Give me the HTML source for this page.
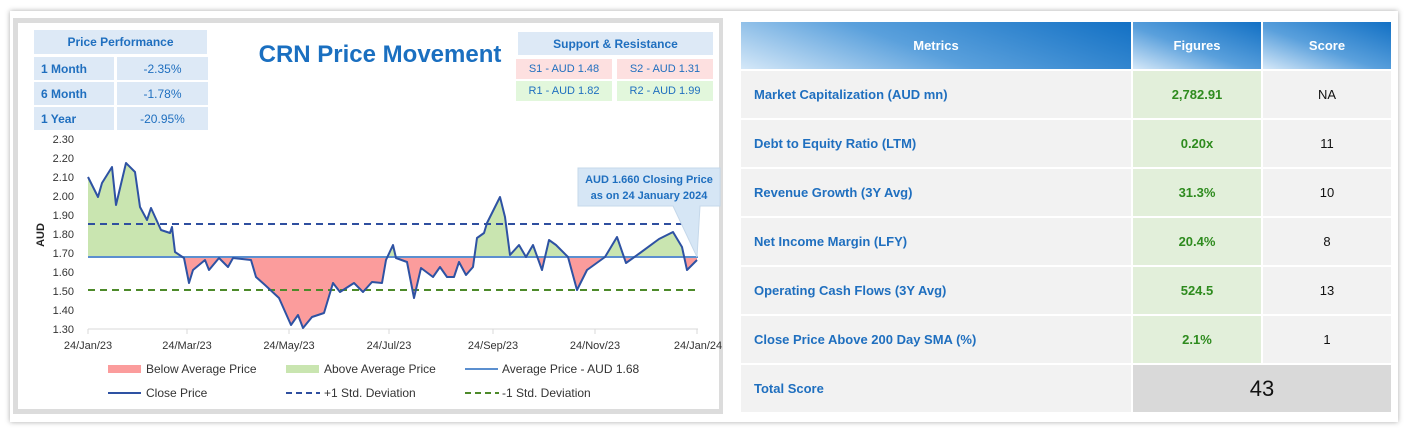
<!DOCTYPE html>
<html><head><meta charset="utf-8"><style>
*{margin:0;padding:0;box-sizing:border-box}
body{width:1407px;height:433px;background:#fff;position:relative;overflow:hidden;font-family:"Liberation Sans",sans-serif}
.abs{position:absolute}
.c{display:flex;align-items:center;justify-content:center}
.pp{background:#dde9f6;color:#1f6fbf;font-size:12px}
.th{position:absolute;top:22px;height:47px;color:#fff;font-weight:bold;font-size:13px;display:flex;align-items:center;justify-content:center;background:linear-gradient(200deg,#1270c4 0%,#5aa0dc 55%,#d5e8f8 100%)}
.row{position:absolute;left:741px;width:650px;height:47px}
.m{position:absolute;left:0;width:390px;height:100%;background:#f2f2f2;color:#1f6fbf;font-weight:bold;font-size:13px;display:flex;align-items:center;padding-left:13px}
.f{position:absolute;left:392px;width:128px;height:100%;background:#e2efda;color:#2e8b1e;font-weight:bold;font-size:13px;display:flex;align-items:center;justify-content:center}
.s{position:absolute;left:522px;width:128px;height:100%;background:#f2f2f2;color:#111;font-size:13px;display:flex;align-items:center;justify-content:center}
</style></head><body>
<div class="abs" style="left:10px;top:11px;width:1388px;height:411px;box-shadow:0 0 5px #aaa;background:#fff"></div>
<div class="abs" style="left:13px;top:18px;width:710px;height:396px;background:#dcdcdc"></div>
<div class="abs" style="left:18px;top:23px;width:701px;height:386px;background:#fff"></div>

<div class="abs c pp" style="left:34px;top:30px;width:173px;height:24px;font-weight:bold">Price Performance</div>
<div class="abs pp" style="left:34px;top:57px;width:80px;height:23px;font-weight:bold;padding:5px 0 0 7px">1 Month</div>
<div class="abs c pp" style="left:117px;top:57px;width:91px;height:23px">-2.35%</div>
<div class="abs pp" style="left:34px;top:82px;width:80px;height:23px;font-weight:bold;padding:5px 0 0 7px">6 Month</div>
<div class="abs c pp" style="left:117px;top:82px;width:91px;height:23px">-1.78%</div>
<div class="abs pp" style="left:34px;top:107px;width:80px;height:23px;font-weight:bold;padding:5px 0 0 7px">1 Year</div>
<div class="abs c pp" style="left:117px;top:107px;width:91px;height:23px">-20.95%</div>

<div class="abs" style="left:235px;top:41px;width:290px;text-align:center;font-size:24px;font-weight:bold;color:#1a6fc0">CRN Price Movement</div>

<div class="abs c pp" style="left:518px;top:32px;width:195px;height:23px;font-weight:bold">Support &amp; Resistance</div>
<div class="abs c" style="left:516px;top:59px;width:96px;height:20px;background:#fde0e0;color:#1f6fbf;font-size:11px">S1 - AUD 1.48</div>
<div class="abs c" style="left:617px;top:59px;width:96px;height:20px;background:#fde0e0;color:#1f6fbf;font-size:11px">S2 - AUD 1.31</div>
<div class="abs c" style="left:516px;top:81px;width:96px;height:20px;background:#e2f7dc;color:#1f6fbf;font-size:11px">R1 - AUD 1.82</div>
<div class="abs c" style="left:617px;top:81px;width:96px;height:20px;background:#e2f7dc;color:#1f6fbf;font-size:11px">R2 - AUD 1.99</div>

<svg class="abs" style="left:0;top:0" width="730" height="433" font-family="Liberation Sans" font-size="11" fill="#333">
<defs>
<clipPath id="up"><rect x="0" y="0" width="730" height="257"/></clipPath>
<clipPath id="dn"><rect x="0" y="257" width="730" height="200"/></clipPath>
</defs>
<g text-anchor="end">
<text x="74" y="143">2.30</text><text x="74" y="162">2.20</text><text x="74" y="181">2.10</text><text x="74" y="200">2.00</text><text x="74" y="219">1.90</text><text x="74" y="238">1.80</text><text x="74" y="257">1.70</text><text x="74" y="276">1.60</text><text x="74" y="295">1.50</text><text x="74" y="314">1.40</text><text x="74" y="333">1.30</text>
</g>
<text x="44" y="235" font-weight="bold" font-size="11" fill="#222" transform="rotate(-90 44 235)" text-anchor="middle">AUD</text>
<polygon clip-path="url(#up)" fill="#c9e5b0" points="88,257 88,177 98,197 102,183 112,167 116,205 126,163 135,172 140,207 147,220 151,208 161,230 170,233 172,227 175,252 184,258 189,283 193,270 205,260 209,270 219,258 228,267 233,258 251,260 256,277 265,285 279,298 291,325 298,315 303,328 312,317 324,313 333,283 340,292 354,283 363,292 372,282 382,283 386,260 393,245 396,258 407,262 414,298 421,268 433,277 440,267 447,277 454,277 459,262 466,275 473,267 477,238 484,233 487,223 500,197 505,217 510,255 519,245 526,257 533,245 542,270 549,240 556,245 568,257 577,290 587,270 605,257 617,237 626,263 640,253 659,239 673,232 682,247 687,270 694,263 697,260 697,257"/>
<polygon clip-path="url(#dn)" fill="#fb9c9c" points="88,257 88,177 98,197 102,183 112,167 116,205 126,163 135,172 140,207 147,220 151,208 161,230 170,233 172,227 175,252 184,258 189,283 193,270 205,260 209,270 219,258 228,267 233,258 251,260 256,277 265,285 279,298 291,325 298,315 303,328 312,317 324,313 333,283 340,292 354,283 363,292 372,282 382,283 386,260 393,245 396,258 407,262 414,298 421,268 433,277 440,267 447,277 454,277 459,262 466,275 473,267 477,238 484,233 487,223 500,197 505,217 510,255 519,245 526,257 533,245 542,270 549,240 556,245 568,257 577,290 587,270 605,257 617,237 626,263 640,253 659,239 673,232 682,247 687,270 694,263 697,260 697,257"/>
<line x1="88" y1="329" x2="698" y2="329" stroke="#d9d9d9"/>
<g stroke="#d9d9d9"><line x1="88" y1="329" x2="88" y2="334"/><line x1="187" y1="329" x2="187" y2="334"/><line x1="289" y1="329" x2="289" y2="334"/><line x1="389" y1="329" x2="389" y2="334"/><line x1="493" y1="329" x2="493" y2="334"/><line x1="595" y1="329" x2="595" y2="334"/><line x1="697" y1="329" x2="697" y2="334"/></g>
<line x1="88" y1="224" x2="698" y2="224" stroke="#2f4f9f" stroke-width="2" stroke-dasharray="7,5"/>
<line x1="88" y1="290" x2="698" y2="290" stroke="#4d8a2a" stroke-width="2" stroke-dasharray="7,5"/>
<line x1="88" y1="257" x2="698" y2="257" stroke="#5b8fcf" stroke-width="2"/>
<polyline fill="none" stroke="#2e52a3" stroke-width="2" stroke-linejoin="round" points="88,177 98,197 102,183 112,167 116,205 126,163 135,172 140,207 147,220 151,208 161,230 170,233 172,227 175,252 184,258 189,283 193,270 205,260 209,270 219,258 228,267 233,258 251,260 256,277 265,285 279,298 291,325 298,315 303,328 312,317 324,313 333,283 340,292 354,283 363,292 372,282 382,283 386,260 393,245 396,258 407,262 414,298 421,268 433,277 440,267 447,277 454,277 459,262 466,275 473,267 477,238 484,233 487,223 500,197 505,217 510,255 519,245 526,257 533,245 542,270 549,240 556,245 568,257 577,290 587,270 605,257 617,237 626,263 640,253 659,239 673,232 682,247 687,270 694,263 697,260"/>
<g text-anchor="middle">
<text x="88" y="349">24/Jan/23</text><text x="187" y="349">24/Mar/23</text><text x="289" y="349">24/May/23</text><text x="389" y="349">24/Jul/23</text><text x="493" y="349">24/Sep/23</text><text x="595" y="349">24/Nov/23</text><text x="698" y="349">24/Jan/24</text>
</g>
<polygon points="578,168 720,168 720,206 700,206 697,257 673,206 578,206" fill="#d6e6f5" stroke="#c5d8ea"/>
<text x="649" y="183" text-anchor="middle" font-weight="bold" font-size="11" fill="#1f6fbf">AUD 1.660 Closing Price</text>
<text x="649" y="199" text-anchor="middle" font-weight="bold" font-size="11" fill="#1f6fbf">as on  24 January 2024</text>
<g font-size="12">
<rect x="108" y="365" width="33" height="8" fill="#fb9c9c"/>
<text x="146" y="373">Below Average Price</text>
<rect x="286" y="365" width="33" height="8" fill="#c9e5b0"/>
<text x="324" y="373">Above Average Price</text>
<line x1="465" y1="369" x2="498" y2="369" stroke="#5b8fcf" stroke-width="2"/>
<text x="502" y="373">Average Price - AUD 1.68</text>
<line x1="108" y1="393" x2="141" y2="393" stroke="#2e52a3" stroke-width="2"/>
<text x="146" y="397">Close Price</text>
<line x1="286" y1="393" x2="320" y2="393" stroke="#2f4f9f" stroke-width="2" stroke-dasharray="6,4"/>
<text x="324" y="397">+1 Std. Deviation</text>
<line x1="465" y1="393" x2="499" y2="393" stroke="#4d8a2a" stroke-width="2" stroke-dasharray="6,4"/>
<text x="502" y="397">-1 Std. Deviation</text>
</g>
</svg>

<div class="th" style="left:741px;width:390px">Metrics</div>
<div class="th" style="left:1133px;width:128px">Figures</div>
<div class="th" style="left:1263px;width:128px">Score</div>

<div class="row" style="top:71px"><div class="m">Market Capitalization (AUD mn)</div><div class="f">2,782.91</div><div class="s">NA</div></div>
<div class="row" style="top:120px"><div class="m">Debt to Equity Ratio (LTM)</div><div class="f">0.20x</div><div class="s">11</div></div>
<div class="row" style="top:169px"><div class="m">Revenue Growth (3Y Avg)</div><div class="f">31.3%</div><div class="s">10</div></div>
<div class="row" style="top:218px"><div class="m">Net Income Margin (LFY)</div><div class="f">20.4%</div><div class="s">8</div></div>
<div class="row" style="top:267px"><div class="m">Operating Cash Flows (3Y Avg)</div><div class="f">524.5</div><div class="s">13</div></div>
<div class="row" style="top:316px"><div class="m">Close Price Above 200 Day SMA (%)</div><div class="f">2.1%</div><div class="s">1</div></div>
<div class="row" style="top:365px"><div class="m">Total Score</div><div class="c" style="position:absolute;left:392px;width:258px;height:100%;background:#d9d9d9;font-size:22px;color:#111">43</div></div>
</body></html>
